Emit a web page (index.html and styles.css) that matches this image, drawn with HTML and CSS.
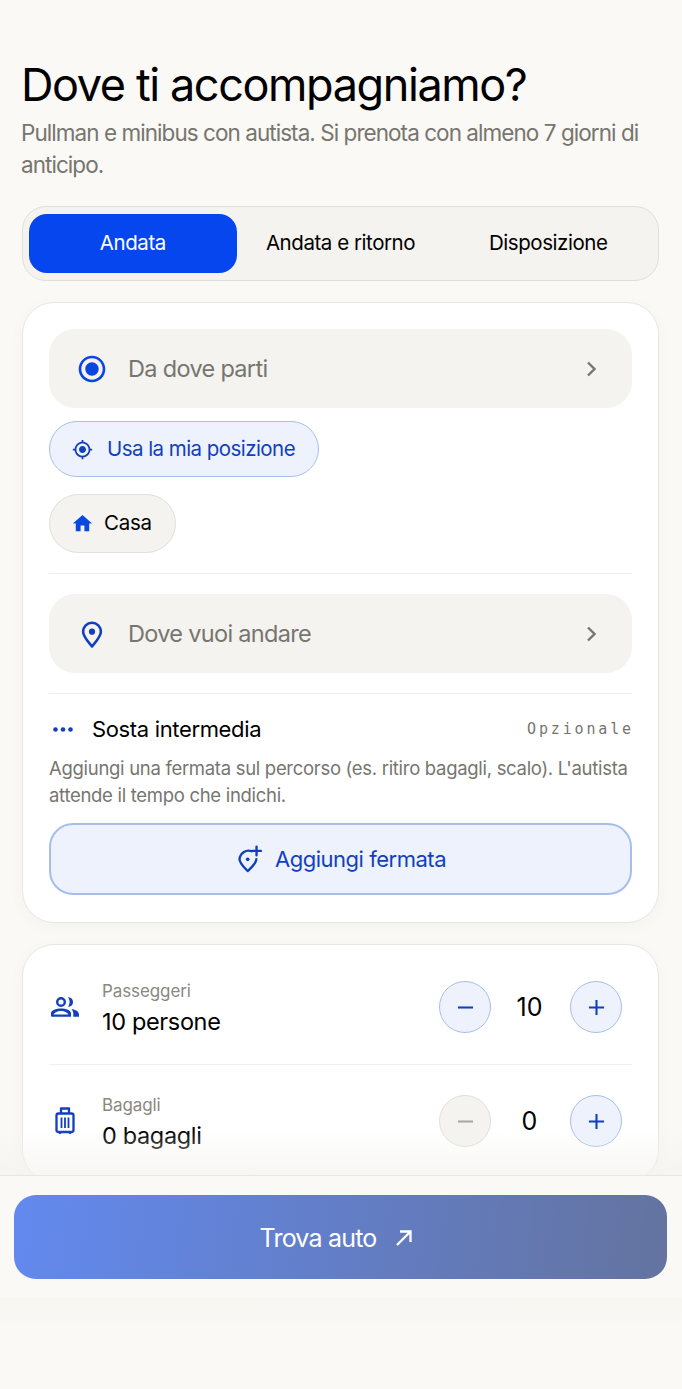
FILE: index.html
```html
<!DOCTYPE html>
<html lang="it">
<head>
    <meta charset="UTF-8">
    <meta name="viewport" content="width=device-width, initial-scale=1.0">
    <title>Dove ti accompagniamo?</title>
    <link rel="stylesheet" href="styles.css">
</head>
<body>
    <div class="page">
        <h1>Dove ti accompagniamo?</h1>
        <p class="subtitle">Pullman e minibus con autista. Si prenota con almeno 7 giorni di anticipo.</p>

        <div class="tabs">
            <button type="button" class="tab active">Andata</button>
            <button type="button" class="tab">Andata e ritorno</button>
            <button type="button" class="tab">Disposizione</button>
        </div>

        <section class="card route-card">
            <div class="field">
                <svg class="field-icon" viewBox="0 0 24 24"><path fill="#0b46e0" d="M12 7c-2.76 0-5 2.24-5 5s2.24 5 5 5 5-2.240 5-5-2.240-5-5-5zm0-5C6.480 2 2 6.480 2 12s4.480 10 10 10 10-4.480 10-10S17.520 2 12 2zm0 18c-4.420 0-8-3.580-8-8s3.580-8 8-8 8 3.580 8 8-3.580 8-8 8z"/></svg>
                <span class="field-label">Da dove parti</span>
                <svg class="chevron" viewBox="0 0 24 24"><path d="M9 5.500l6.500 6.500-6.500 6.500"/></svg>
            </div>

            <button type="button" class="chip chip-blue">
                <svg class="chip-icon" viewBox="0 0 24 24"><path fill="#123fbc" d="M12 8c-2.210 0-4 1.790-4 4s1.790 4 4 4 4-1.790 4-4-1.790-4-4-4zm8.940 3c-.46-4.170-3.770-7.480-7.940-7.940V1h-2v2.060C6.830 3.520 3.520 6.830 3.060 11H1v2h2.060c.46 4.170 3.770 7.480 7.940 7.940V23h2v-2.060c4.170-.46 7.480-3.770 7.940-7.940H23v-2h-2.060zM12 19c-3.870 0-7-3.130-7-7s3.130-7 7-7 7 3.130 7 7-3.130 7-7 7z"/></svg>
                <span class="chip-text">Usa la mia posizione</span>
            </button>
            <button type="button" class="chip chip-grey">
                <svg class="home-icon" viewBox="0 0 24 24"><path fill="#0b46e0" d="M10 20v-6h4v6h5v-8h3L12 3 2 12h3v8z"/></svg>
                <span class="chip-text">Casa</span>
            </button>

            <div class="divider"></div>

            <div class="field">
                <svg class="field-icon" viewBox="-1.500 -1.500 27 27"><path fill="none" stroke="#123fbc" stroke-width="2.200" stroke-linejoin="round" d="M12 22.500c-1-1.600-7.500-8-7.500-12.500a7.500 7.500 0 0 1 15 0c0 4.500-6.500 10.900-7.500 12.500z"/><circle cx="12" cy="10" r="2.600" fill="#123fbc"/></svg>
                <span class="field-label">Dove vuoi andare</span>
                <svg class="chevron" viewBox="0 0 24 24"><path d="M9 5.500l6.500 6.500-6.500 6.500"/></svg>
            </div>

            <div class="divider"></div>

            <div class="stop-head">
                <svg class="dots" viewBox="0 0 20 5"><circle cx="2.500" cy="2.500" r="2.300"/><circle cx="10" cy="2.500" r="2.300"/><circle cx="17.500" cy="2.500" r="2.300"/></svg>
                <span class="stop-title">Sosta intermedia</span>
                <span class="optional">Opzionale</span>
            </div>
            <p class="stop-text">Aggiungi una fermata sul percorso (es. ritiro bagagli, scalo). L'autista attende il tempo che indichi.</p>
            <button type="button" class="add-stop">
                <svg class="add-icon" viewBox="0 0 26 26"><path fill="none" stroke="#123fbc" stroke-width="2.200" stroke-linecap="round" stroke-linejoin="round" d="M15.500 5.800a8.500 8.500 0 0 0-11.300 7.400c0 3.800 5 8.200 7.600 11 2.600-2.800 7.800-6.800 8-11"/><circle cx="11.800" cy="13.300" r="1.700" fill="#123fbc"/><path fill="none" stroke="#123fbc" stroke-width="2.200" stroke-linecap="round" d="M20 1.500v8M16 5.500h8"/></svg>
                Aggiungi fermata
            </button>
        </section>

        <section class="card counters">
            <div class="counter">
                <svg class="counter-icon" viewBox="0 0 30 24"><g fill="#123fbc"><path fill-rule="evenodd" d="M11 2a5 5 0 1 1 0 10 5 5 0 0 1 0-10zm0 2.400a2.600 2.600 0 1 0 0 5.200 2.600 2.600 0 0 0 0-5.200z"/><path d="M18 2.200c3.600 0 5 2.500 5 4.800s-1.400 4.800-5 4.800c1-1.400 1.600-3 1.600-4.800S19 3.600 18 2.200z"/><path fill-rule="evenodd" d="M1 20.500v-2c0-3 5-4.900 10-4.900s10 1.900 10 4.900v3.300H2.200C1.500 21.800 1 21.300 1 20.500zm2.600-.9h14.800c-.3-1.300-3.700-3.500-7.400-3.500s-7.100 2.200-7.400 3.500z"/><path d="M21.500 14c4 .6 7.500 2.500 7.500 5.500v2.300h-5.700v-3c0-1.900-.7-3.500-1.800-4.800z"/></g></svg>
                <div class="counter-text">
                    <span class="counter-label">Passeggeri</span>
                    <span class="counter-value">10 persone</span>
                </div>
                <div class="stepper">
                    <button type="button" class="step"><svg class="step-icon" viewBox="0 0 18 18"><path d="M1 9h16"/></svg></button>
                    <span class="step-num">10</span>
                    <button type="button" class="step"><svg class="step-icon" viewBox="0 0 18 18"><path d="M1 9h16M9 1v16"/></svg></button>
                </div>
            </div>
            <div class="divider counter-divider"></div>
            <div class="counter">
                <svg class="counter-icon" viewBox="0 0 30 30"><g fill="none" stroke="#123fbc" stroke-width="2.300" stroke-linejoin="round"><rect x="6.500" y="7.500" width="17" height="18.500" rx="2"/><path d="M11 7.500V2.500h8v5"/><path d="M11.500 11.500v10.500M15 11.500v10.500M18.500 11.500v10.500" stroke-width="1.800"/><path d="M10 26v2M20 26v2"/></g></svg>
                <div class="counter-text">
                    <span class="counter-label">Bagagli</span>
                    <span class="counter-value">0 bagagli</span>
                </div>
                <div class="stepper">
                    <button type="button" class="step disabled"><svg class="step-icon" viewBox="0 0 18 18"><path d="M1 9h16"/></svg></button>
                    <span class="step-num">0</span>
                    <button type="button" class="step"><svg class="step-icon" viewBox="0 0 18 18"><path d="M1 9h16M9 1v16"/></svg></button>
                </div>
            </div>
        </section>

        <div class="footer-bar">
            <button type="button" class="find-btn">
                Trova auto
                <svg class="arrow" viewBox="0 0 20 20"><path fill="none" stroke="#fff" stroke-width="2.300" d="M3 17L16 4M6 3.500h10.500V14"/></svg>
            </button>
        </div>
    </div>
</body>
</html>
```

FILE: styles.css
```css
* {
    box-sizing: border-box;
}
html, body {
    margin: 0;
    padding: 0;
}
body {
    font-family: 'Inter', sans-serif;
    background-color: #faf9f5;
    color: #000;
}
button {
    font-family: inherit;
    cursor: pointer;
}
.page {
    position: relative;
    width: 682px;
    height: 1389px;
    padding: 57px 23px 0 22px;
    overflow: hidden;
}
h1 {
    margin: 0 0 0 -1px;
    font-size: 45px;
    line-height: 56px;
    font-weight: 400;
    letter-spacing: -1.4px;
}
.subtitle {
    margin: 4px 0 0 -1px;
    font-size: 22.500px;
    line-height: 32px;
    color: #77756f;
    letter-spacing: -0.95px;
}
.tabs {
    display: flex;
    height: 75px;
    margin-top: 25px;
    padding: 7px 6px 7px 6px;
    background-color: #f4f3ef;
    border: 1.500px solid #e0dfd9;
    border-radius: 24px;
}
.tab {
    flex: 1;
    border: none;
    background: none;
    border-radius: 18px;
    font-size: 20.500px;
    letter-spacing: -0.45px;
    color: #000;
    padding: 0 0 2px;
}
.tab.active {
    background-color: #0546ef;
    color: #fff;
}
.card {
    background-color: #fff;
    border: 1px solid #e8e7e2;
    border-radius: 32px;
    padding: 0 26px;
    box-shadow: 0 4px 16px rgba(40, 40, 20, 0.03);
}
.route-card {
    height: 621px;
    margin-top: 21px;
    padding-top: 26px;
}
.field {
    display: flex;
    align-items: center;
    height: 79px;
    padding: 0 29px 0 27px;
    background-color: #f4f3ef;
    border-radius: 26px;
}
.field-icon {
    width: 32px;
    height: 32px;
    flex: none;
}
.field-label {
    flex: 1;
    margin-left: 20px;
    font-size: 23.500px;
    letter-spacing: -0.68px;
    color: #77756f;
}
.chevron {
    width: 24px;
    height: 24px;
    fill: none;
    stroke: #77756f;
    stroke-width: 2.400;
}
.chip {
    display: flex;
    align-items: center;
    border-radius: 30px;
    font-size: 20.500px;
    letter-spacing: -0.55px;
    padding: 0;
}
.chip-text {
    margin-bottom: 2px;
}
.chip-blue {
    height: 56px;
    width: 270px;
    margin-top: 13px;
    padding-left: 22px;
    gap: 14px;
    background-color: #edf2fc;
    border: 1.500px solid #a7bfe8;
    color: #123fbc;
}
.chip-grey {
    height: 59px;
    width: 127px;
    margin-top: 17px;
    padding-left: 21px;
    gap: 10px;
    background-color: #f4f3ef;
    border: 1.500px solid #e0dfd9;
    color: #000;
    letter-spacing: -0.3px;
}
.chip-icon {
    width: 21px;
    height: 21px;
}
.home-icon {
    width: 23px;
    height: 23px;
}
.divider {
    height: 1px;
    background-color: #f1f0ec;
    margin: 20px 0;
}
.stop-head {
    display: flex;
    align-items: center;
    height: 30px;
    margin-top: 20px;
}
.dots {
    width: 20px;
    height: 5px;
    fill: #123fbc;
    margin: 0 19px 0 4px;
}
.stop-title {
    flex: 1;
    font-size: 22px;
    letter-spacing: -0.35px;
}
.optional {
    font-family: 'DejaVu Sans Mono', monospace;
    font-size: 15px;
    letter-spacing: 2.850px;
    color: #77756f;
    margin-right: -2px;
}
.stop-text {
    margin: 11px 0 0;
    font-size: 18.500px;
    line-height: 27px;
    letter-spacing: -0.3px;
    color: #77756f;
}
.add-stop {
    display: flex;
    align-items: center;
    justify-content: center;
    gap: 12px;
    width: 100%;
    height: 72px;
    margin-top: 14px;
    background-color: #edf2fc;
    border: 2px solid #a7bfe8;
    border-radius: 24px;
    color: #123fbc;
    font-size: 22px;
    letter-spacing: -0.48px;
}
.add-icon {
    width: 28px;
    height: 28px;
}
.counters {
    height: 238px;
    margin-top: 21px;
    padding-top: 26px;
}
.counter {
    display: flex;
    align-items: center;
    height: 72px;
}
.counter-icon {
    width: 30px;
    height: 30px;
    flex: none;
    margin: 0 22px 0 1px;
}
.counter-text {
    display: flex;
    flex-direction: column;
    flex: 1;
    padding-top: 4px;
}
.counter-label {
    font-size: 17px;
    line-height: 24px;
    color: #8a8880;
    letter-spacing: -0.1px;
}
.counter-value {
    font-size: 23.500px;
    line-height: 34px;
    letter-spacing: -0.35px;
    margin-top: 2px;
}
.stepper {
    display: flex;
    align-items: center;
    margin-right: 10px;
}
.step {
    display: flex;
    align-items: center;
    justify-content: center;
    width: 52px;
    height: 52px;
    padding: 0;
    border-radius: 50%;
    background-color: #edf2fc;
    border: 1.500px solid #a7bfe8;
}
.step.disabled {
    background-color: #f4f3ef;
    border-color: #e0dfd9;
}
.step-icon {
    width: 17px;
    height: 17px;
    fill: none;
    stroke: #123fbc;
    stroke-width: 2.200;
}
.step.disabled .step-icon {
    stroke: #a9a8a2;
}
.step-num {
    width: 79px;
    padding-right: 2px;
    text-align: center;
    font-size: 25px;
}
.counter-divider {
    margin: 21px 0 20px;
}
.footer-bar {
    position: absolute;
    left: 0;
    right: 0;
    top: 1175px;
    bottom: 0;
    padding: 19px 15px 0 14px;
    background-color: #faf9f5;
    border-top: 1px solid #e8e7e2;
}
/* fade over the last counter row */
.footer-bar::before {
    content: "";
    position: absolute;
    left: 0;
    right: 0;
    top: -46px;
    height: 45px;
    background: linear-gradient(to bottom, rgba(244, 243, 239, 0), rgba(244, 243, 239, 0.7));
}
/* faint band under the button */
.footer-bar::after {
    content: "";
    position: absolute;
    left: 0;
    right: 0;
    top: 122px;
    height: 30px;
    background: linear-gradient(to bottom, rgba(240, 238, 230, 0.3), rgba(240, 238, 230, 0));
}
.find-btn {
    display: flex;
    align-items: center;
    justify-content: center;
    gap: 18px;
    width: 100%;
    height: 84px;
    padding: 2px 7px 0 0;
    border: none;
    border-radius: 22px;
    background: linear-gradient(95deg, #6289ef, #64739f);
    color: #fff;
    font-size: 25px;
    letter-spacing: -0.8px;
}
.arrow {
    width: 20px;
    height: 20px;
}
```
